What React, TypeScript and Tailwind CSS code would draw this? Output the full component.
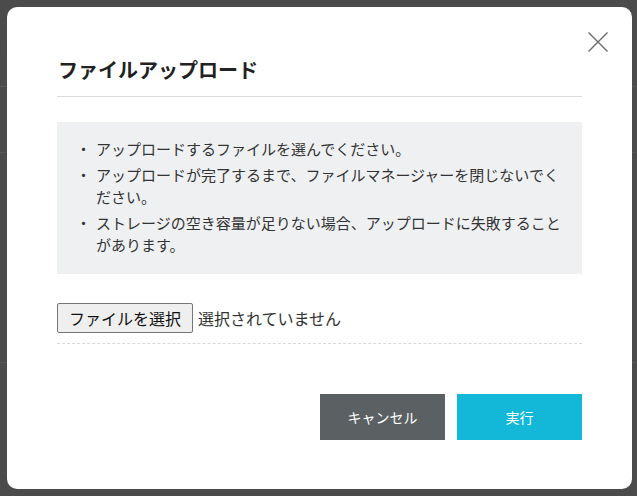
const notes = [
  'アップロードするファイルを選んでください。',
  'アップロードが完了するまで、ファイルマネージャーを閉じないでください。',
  'ストレージの空き容量が足りない場合、アップロードに失敗することがあります。',
];

const App = () => {
  return (
    <div
      className="relative w-[637px] h-[496px] overflow-hidden bg-[#4b4b4b] text-[#333]"
      style={{ fontFamily: '"Noto Sans CJK JP", "Noto Sans", sans-serif' }}
    >
      {/* page behind the overlay */}
      <div className="absolute inset-0">
        <div className="h-[87px] border-b border-[#5a5a5a] pt-[36px]">
          <span className="block -ml-[9px] text-[18px] text-[#2e2e2e]" style={{ fontFamily: '"Liberation Sans", sans-serif' }}>
            d
          </span>
        </div>
        <div className="h-[66px] border-b border-[#575757]"></div>
        <div className="h-[210px] border-b border-[#575757]"></div>
      </div>

      {/* modal */}
      <div className="absolute inset-0 pl-[7px] pt-[7px]">
        <div className="relative w-[625px] h-[482px] bg-white rounded-[10px] px-[50px] pt-[49px]">
          <button className="absolute top-[25px] right-[24px] w-5 h-5">
            <svg viewBox="0 0 20 20" width="20" height="20">
              <path d="M0.5 0.5 L19.5 19.5 M19.5 0.5 L0.5 19.5" stroke="#6b6b6b" strokeWidth="1.4" fill="none" />
            </svg>
          </button>

          <h2 className="text-[20px] leading-[28px] font-bold text-[#222] pl-px pb-3 border-b border-[#dcdcdc]">
            ファイルアップロード
          </h2>

          <div className="mt-[25px] bg-[#eff0f2] pl-[19px] pr-4 pt-4 pb-[18px]">
            <ul className="flex flex-col gap-1 text-[15px] leading-[22px] text-[#333]">
              {notes.map((n, i) => (
                <li key={i} className="flex">
                  <span className="w-5 shrink-0">・</span>
                  <span>{n}</span>
                </li>
              ))}
            </ul>
          </div>

          <div className="mt-[29px] pb-[10px] border-b border-dashed border-[#dadada] flex items-center">
            <button className="h-[30px] px-[11px] bg-[#efefef] border border-[#767676] rounded-[2px] text-[16px] text-[#111] leading-none">
              ファイルを選択
            </button>
            <span className="ml-[5px] text-[16px] text-[#333]">選択されていません</span>
          </div>

          <div className="mt-[50px] flex justify-end gap-3">
            <button className="w-[125px] h-[46px] bg-[#5b6163] text-white text-[14px]">キャンセル</button>
            <button className="w-[125px] h-[46px] bg-[#13b8d8] text-white text-[14px]">実行</button>
          </div>
        </div>
      </div>
    </div>
  );
};

export default App;
